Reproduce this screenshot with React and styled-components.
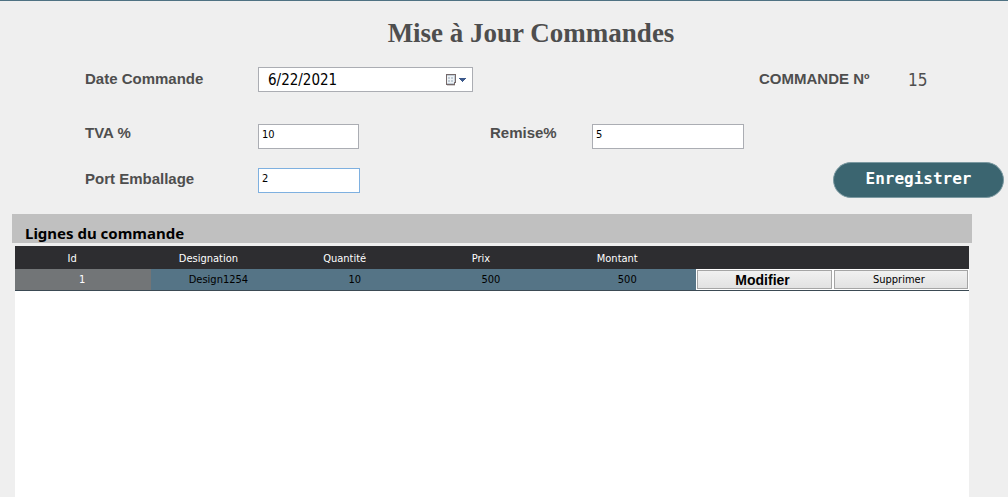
import React from "react";
import styled, { createGlobalStyle } from "styled-components";

const tahoma = `"DejaVu Sans Condensed", "Noto Sans", sans-serif`;

const GlobalStyle = createGlobalStyle`
  *, *::before, *::after { box-sizing: border-box; }
  body {
    margin: 0;
    background: #efefef;
    font-family: "Liberation Sans", sans-serif;
  }
`;

const Page = styled.main`
  display: flex;
  flex-direction: column;
  min-height: 100vh;
  border-top: 1px solid #4f7283;
`;

const Title = styled.h1`
  margin: 16px 0 0 54px;
  text-align: center;
  color: #4e4e4e;
  font: bold 27px/32px "Liberation Serif", serif;
`;

const Form = styled.form`
  padding: 18px 4px 0 85px;
`;

const FormRow = styled.div`
  display: grid;
  grid-template-columns: 173px 232px 102px 167px 1fr;
  align-items: center;
  height: ${(p) => p.$height}px;
  margin-top: ${(p) => p.$gap || 0}px;
`;

const Label = styled.label`
  color: #4e4e4e;
  font-size: 15px;
  font-weight: bold;
  line-height: 20px;
  padding-bottom: ${(p) => (p.$raised ? 6 : 2)}px;
`;

const Field = styled.input`
  width: ${(p) => p.$width}px;
  height: 25px;
  border: 1px solid ${(p) => (p.$active ? "#7eb0e0" : "#abadb3")};
  border-radius: 0;
  outline: none;
  background: #fff;
  color: #000;
  padding: 0 3px 4px;
  font: 11px/16px ${tahoma};
`;

const DateBox = styled.div`
  display: flex;
  align-items: center;
  width: 215px;
  height: 25px;
  border: 1px solid #abadb3;
  background: #fff;
  padding: 0 5px 0 9px;
`;

const DateInput = styled.input`
  flex: 1;
  min-width: 0;
  border: 0;
  outline: none;
  padding: 0;
  background: transparent;
  color: #000;
  font: 15px/20px ${tahoma};
`;

const CalendarButton = styled.button`
  display: flex;
  border: 0;
  padding: 0;
  background: none;
`;

const OrderNumber = styled.div`
  grid-column: 5;
  display: flex;
  align-items: center;
`;

const OrderLabel = styled(Label).attrs({ as: "span" })`
  width: 149px;
`;

const OrderValue = styled.output`
  color: #4e4e4e;
  font: 17px/20px ${tahoma};
`;

const SaveButton = styled.button`
  grid-column: 5;
  justify-self: end;
  width: 171px;
  height: 36px;
  border: 1px solid #7b99a1;
  border-radius: 18px;
  background: #3b6570;
  color: #fff;
  padding: 0 0 2px;
  font: bold 16px/20px "DejaVu Sans Mono", monospace;
`;

const SectionTitle = styled.h2`
  margin: 16px 36px 3px 12px;
  height: 29px;
  padding: 7px 13px 0;
  background: #c0c0c0;
  color: #000;
  font: bold 15px/24px "Noto Sans", sans-serif;
`;

const GridPanel = styled.section`
  flex: 1;
  margin: 0 39px 0 15px;
  background: #fff;
`;

const Table = styled.table`
  width: 100%;
  table-layout: fixed;
  border-collapse: separate;
  border-spacing: 0;
  font: 11px/16px ${tahoma};
`;

const HeadCell = styled.th`
  height: 23px;
  padding: 2px 22px 0 0;
  background: #2d2d30;
  color: #fff;
  font-weight: normal;
`;

const Cell = styled.td`
  height: 22px;
  padding: 1px 2px 0 0;
  text-align: center;
  border-bottom: 1px solid #3b4a54;
  background: ${(p) => (p.$id ? "#727577" : "#557486")};
  color: ${(p) => (p.$id ? "#fff" : "#000")};
`;

const ActionCell = styled(Cell)`
  padding: 1px;
  background: #fff;
`;

const ActionButton = styled.button`
  display: block;
  width: 100%;
  height: 19px;
  padding: 0 4px 0 0;
  border: 1px solid #a5a5a5;
  border-radius: 0;
  background: linear-gradient(#f1f1f1, #e2e2e2);
  color: #000;
  font: ${(p) => (p.$strong ? `bold 14px/16px "Liberation Sans", sans-serif` : `11px/16px ${tahoma}`)};
`;

const CalendarIcon = () => (
  <svg width="22" height="14" viewBox="0 0 22 14" aria-hidden="true" shapeRendering="crispEdges">
    <path d="M2 12.5h8" fill="none" stroke="#d3cfcf" />
    <path d="M1.5 1.5h9v8h-1v2h-8z" fill="#c3ced8" stroke="#75696a" />
    <path d="M9 9h2v1h-1v1h-1z" fill="#75696a" />
    <path
      d="M3 3.5h6M3 6.5h6M3 9.5h6M2.5 3v7M5.5 3v7M8.5 3v6"
      fill="none"
      stroke="#eef2f5"
    />
    <path d="M14 5h7v1h-1v1h-1v1h-1v1h-1V8h-1V7h-1V6h-1z" fill="#3d5a8c" />
  </svg>
);

const columns = ["Id", "Designation", "Quantité", "Prix", "Montant"];
const lines = [["1", "Design1254", "10", "500", "500"]];

export default function App() {
  return (
    <>
      <GlobalStyle />
      <Page>
        <Title>Mise à Jour Commandes</Title>
        <Form onSubmit={(e) => e.preventDefault()}>
          <FormRow $height={25}>
            <Label htmlFor="date">Date Commande</Label>
            <DateBox>
              <DateInput id="date" defaultValue="6/22/2021" />
              <CalendarButton type="button" aria-label="Calendrier">
                <CalendarIcon />
              </CalendarButton>
            </DateBox>
            <OrderNumber>
              <OrderLabel>COMMANDE Nº</OrderLabel>
              <OrderValue>15</OrderValue>
            </OrderNumber>
          </FormRow>
          <FormRow $height={25} $gap={31}>
            <Label htmlFor="tva" $raised>TVA %</Label>
            <Field id="tva" $width={101} defaultValue="10" />
            <Label htmlFor="remise" $raised>Remise%</Label>
            <Field id="remise" $width={152} defaultValue="5" />
          </FormRow>
          <FormRow $height={36} $gap={14}>
            <Label htmlFor="port">Port Emballage</Label>
            <Field id="port" $width={102} $active defaultValue="2" />
            <SaveButton type="submit">Enregistrer</SaveButton>
          </FormRow>
        </Form>
        <SectionTitle>Lignes du commande</SectionTitle>
        <GridPanel>
          <Table>
            <thead>
              <tr>
                {columns.map((name) => (
                  <HeadCell key={name} scope="col">{name}</HeadCell>
                ))}
                <HeadCell as="td" colSpan={2} />
              </tr>
            </thead>
            <tbody>
              {lines.map((line) => (
                <tr key={line[0]}>
                  {line.map((value, i) => (
                    <Cell key={columns[i]} $id={i === 0}>{value}</Cell>
                  ))}
                  <ActionCell>
                    <ActionButton type="button" $strong>Modifier</ActionButton>
                  </ActionCell>
                  <ActionCell>
                    <ActionButton type="button">Supprimer</ActionButton>
                  </ActionCell>
                </tr>
              ))}
            </tbody>
          </Table>
        </GridPanel>
      </Page>
    </>
  );
}
